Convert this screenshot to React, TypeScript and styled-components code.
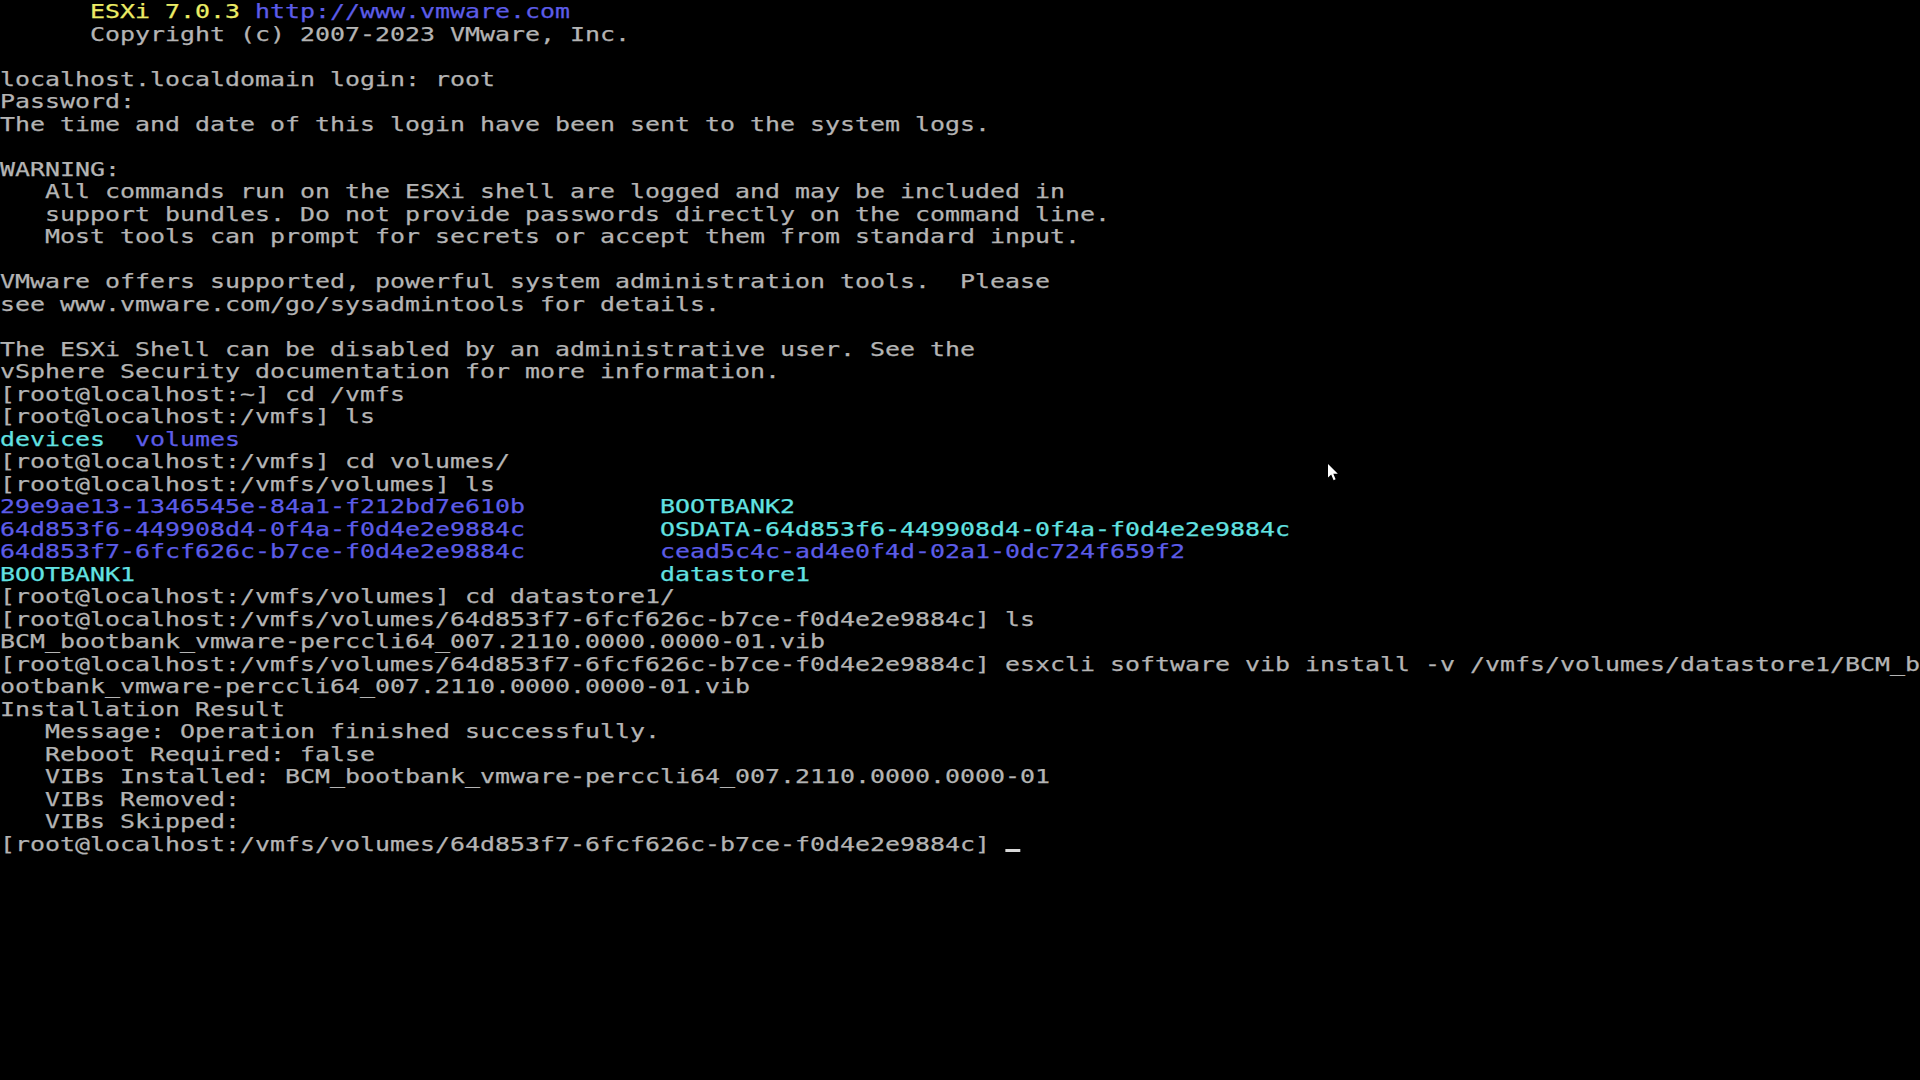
import React from 'react'
import styled, { createGlobalStyle } from 'styled-components'

type Tone = 'text' | 'yellow' | 'blue' | 'cyan'
type Seg = [Tone, string]

const palette: Record<Tone, string> = {
	text: '#b4b4b4',
	yellow: '#ecec66',
	blue: '#5c5ce8',
	cyan: '#62e2e2',
}

const PROMPT_DS = '[root@localhost:/vmfs/volumes/64d853f7-6fcf626c-b7ce-f0d4e2e9884c]'
const VIB = 'BCM_bootbank_vmware-perccli64_007.2110.0000.0000-01'

const col = (s: string, width = 44) => s.padEnd(width, ' ')

const t = (s: string): Seg => ['text', s]

const lines: Seg[][] = [
	[t('      '), ['yellow', 'ESXi 7.0.3'], t(' '), ['blue', 'http://www.vmware.com']],
	[t('      Copyright (c) 2007-2023 VMware, Inc.')],
	[],
	[t('localhost.localdomain login: root')],
	[t('Password:')],
	[t('The time and date of this login have been sent to the system logs.')],
	[],
	[t('WARNING:')],
	[t('   All commands run on the ESXi shell are logged and may be included in')],
	[t('   support bundles. Do not provide passwords directly on the command line.')],
	[t('   Most tools can prompt for secrets or accept them from standard input.')],
	[],
	[t('VMware offers supported, powerful system administration tools.  Please')],
	[t('see www.vmware.com/go/sysadmintools for details.')],
	[],
	[t('The ESXi Shell can be disabled by an administrative user. See the')],
	[t('vSphere Security documentation for more information.')],
	[t('[root@localhost:~] cd /vmfs')],
	[t('[root@localhost:/vmfs] ls')],
	[['cyan', 'devices'], t('  '), ['blue', 'volumes']],
	[t('[root@localhost:/vmfs] cd volumes/')],
	[t('[root@localhost:/vmfs/volumes] ls')],
	[['blue', col('29e9ae13-1346545e-84a1-f212bd7e610b')], ['cyan', 'BOOTBANK2']],
	[['blue', col('64d853f6-449908d4-0f4a-f0d4e2e9884c')], ['cyan', 'OSDATA-64d853f6-449908d4-0f4a-f0d4e2e9884c']],
	[['blue', col('64d853f7-6fcf626c-b7ce-f0d4e2e9884c')], ['blue', 'cead5c4c-ad4e0f4d-02a1-0dc724f659f2']],
	[['cyan', 'BOOTBANK1'], t(' '.repeat(35)), ['cyan', 'datastore1']],
	[t('[root@localhost:/vmfs/volumes] cd datastore1/')],
	[t(`${PROMPT_DS} ls`)],
	[t(`${VIB}.vib`)],
	[t(`${PROMPT_DS} esxcli software vib install -v /vmfs/volumes/datastore1/BCM_b`)],
	[t('ootbank_vmware-perccli64_007.2110.0000.0000-01.vib')],
	[t('Installation Result')],
	[t('   Message: Operation finished successfully.')],
	[t('   Reboot Required: false')],
	[t(`   VIBs Installed: ${VIB}`)],
	[t('   VIBs Removed:')],
	[t('   VIBs Skipped:')],
]

const App = (): JSX.Element => {
	return (
		<>
			<GlobalStyle />
			<Monitor>
				<Screen>
					{lines.map((segs, idx) => (
						<Row key={idx}>
							{segs.map(([tone, text], i) => (
								<Chunk key={i} $tone={tone}>
									{text}
								</Chunk>
							))}
						</Row>
					))}
					<Row>
						<Chunk $tone="text">{PROMPT_DS} </Chunk>
						<Cursor />
					</Row>
				</Screen>
				<Pointer width="12" height="18" viewBox="0 0 12 18">
					<path d="M0 0 L0 13.5 L3.2 10.6 L5.6 16.2 L7.6 15.3 L5.3 9.8 L9.8 9.8 Z" fill="#ffffff" />
				</Pointer>
			</Monitor>
		</>
	)
}

export default App

const GlobalStyle = createGlobalStyle`
	html, body {
		margin: 0;
		padding: 0;
		background: #000;
		overflow: hidden;
	}
`

const Monitor = styled.main`
	position: relative;
	width: 1920px;
	height: 1080px;
	background: #000;
	overflow: hidden;
`

/* 128x48 text console: 20px DejaVu glyphs stretched to 15px cells */
const Screen = styled.div`
	width: calc(1920px / 1.2458);
	transform: scaleX(1.2458);
	transform-origin: 0 0;
	font-family: 'DejaVu Sans Mono', 'Liberation Mono', monospace;
	font-size: 20px;
	color: ${palette.text};
	-webkit-font-smoothing: antialiased;
`

const Row = styled.div`
	height: 22.5px;
	line-height: 22.5px;
	white-space: pre;
`

const Chunk = styled.span<{ $tone: Tone }>`
	color: ${({ $tone }) => palette[$tone]};
	-webkit-text-stroke: 0.25px currentColor;
`

const Cursor = styled.span`
	display: inline-block;
	width: 1ch;
	height: 3px;
	margin-top: 16.5px;
	vertical-align: top;
	background: #d8d8d8;
`

const Pointer = styled.svg`
	position: absolute;
	left: 1328px;
	top: 464px;
`
